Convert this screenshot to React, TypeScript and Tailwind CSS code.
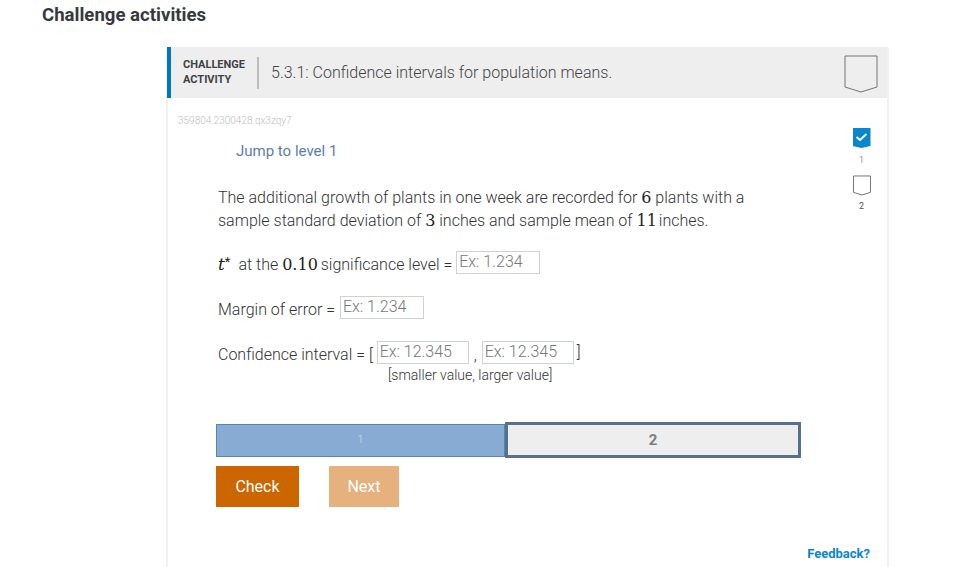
function Shield({ className }: { className: string }) {
  return (
    <svg className={className} viewBox="0 0 34 38" fill="none">
      <path d="M1 1H33V32L17 37L1 32Z" stroke="#757575" strokeWidth="1" vectorEffect="non-scaling-stroke" />
    </svg>
  );
}

function Field({ text, width }: { text: string; width: string }) {
  return (
    <span className={`inline-block h-[23px] border border-[#ccd3d6] pl-[2px] text-[16px] font-light leading-[20px] text-[#777] ${width}`}>
      {text}
    </span>
  );
}

function MathNum({ children }: { children: React.ReactNode }) {
  return <span className="font-['DejaVu_Serif',serif] text-[16px] leading-[16px] text-[#222]">{children}</span>;
}

export default function App() {
  return (
    <div className="h-[567px] w-[966px] overflow-hidden bg-white font-['Roboto',sans-serif] font-light text-[#333]">
      <h2 className="pl-[42px] pt-[4px] text-[18.6px] font-bold leading-[22px] text-[#36393d]">Challenge activities</h2>

      <div className="ml-[166px] mt-[21px] h-[530px] w-[723px] rounded-t-[2px] border-x-2 border-[#f1f1f1]">
        <div className="-ml-px flex h-[51px] items-center border-l-4 border-[#0077c5] bg-[#eeeeee]">
          <div className="-mt-[2px] w-[74px] pl-[12px] text-[11px] font-bold leading-[15px] text-[#3e4145]">
            CHALLENGE
            <br />
            ACTIVITY
          </div>
          <div className="ml-[12px] h-[32px] w-[2px] bg-[#bdbdbd]" />
          <div className="ml-[12px] text-[16px] text-[#444]">5.3.1: Confidence intervals for population means.</div>
          <Shield className="ml-auto mr-[9px] mt-[2px] h-[38px] w-[34px]" />
        </div>

        <div className="flex">
          <div className="w-[672px]">
            <div className="pl-[10px] pt-[17px] text-[10px] leading-[12px] text-[#bdbdbd]">359804.2300428.qx3zqy7</div>
            <div className="pl-[68px] pt-[15px] text-[15px] font-normal leading-[18px] text-[#5b7ea8]">Jump to level 1</div>

            <div className="pl-[50px]">
              <p className="mt-[26px] h-[46px] text-[16px] leading-[23px]">
                The additional growth of plants in one week are recorded for <MathNum>6</MathNum> plants with a
                <br />
                sample standard deviation of <MathNum>3</MathNum> inches and sample mean of <MathNum>11</MathNum>
                <span className="-ml-[2px]"> inches.</span>
              </p>

              <div className="mt-[18px] flex h-[24px] items-center text-[16px]">
                <div className="mt-[6px] flex items-center">
                  <span className="font-['DejaVu_Serif',serif] text-[17px] italic text-[#222]">t</span>
                  <span className="mb-[6px] text-[13px] font-normal text-[#222]">*</span>
                  <span className="ml-[8px]">at the&nbsp;</span>
                  <MathNum>0.10</MathNum>
                  <span className="-ml-[1px]">&nbsp;significance level =&nbsp;</span>
                </div>
                <Field text="Ex: 1.234" width="w-[84px]" />
              </div>

              <div className="mt-[21px] flex h-[24px] items-center text-[16px]">
                <span className="mr-[1px] mt-[6px]">Margin of error =&nbsp;</span>
                <Field text="Ex: 1.234" width="w-[84px]" />
              </div>

              <div className="mt-[21px] flex h-[24px] items-center text-[16px]">
                <span className="mt-[6px]">Confidence interval = [&nbsp;</span>
                <Field text="Ex: 12.345" width="w-[92px]" />
                <span className="mx-[5px] mt-[8px]">,</span>
                <Field text="Ex: 12.345" width="w-[92px]" />
                <span className="ml-[3px]">]</span>
              </div>
              <div className="pl-[170px] pt-[2px] text-[14px] leading-[18px] text-[#333]">[smaller value, larger value]</div>

              <div className="-ml-[2px] mt-[38px] flex h-[36px] w-[585px] items-center">
                <div className="flex h-[33px] w-[289px] items-center justify-center border border-[#5b84ac] bg-[#87abd2] text-[11px] text-[#d4dfec]">
                  1
                </div>
                <div className="flex h-[36px] w-[296px] items-center justify-center border-[3px] border-[#56708f] bg-[#eeeeee] text-[15px] font-bold text-[#7d7d7d]">
                  2
                </div>
              </div>

              <div className="-ml-[2px] mt-[8px] flex gap-[30px]">
                <div className="flex h-[41px] w-[83px] items-center justify-center bg-[#cc6600] pt-[1px] text-[16px] font-normal text-white">Check</div>
                <div className="flex h-[41px] w-[70px] items-center justify-center bg-[#e5b17d] pt-[1px] text-[16px] font-normal text-white">Next</div>
              </div>
            </div>
          </div>

          <div className="flex w-[43px] flex-col items-center pt-[30px] text-[9px] font-normal leading-[12px]">
            <div className="flex h-[20px] w-[18px] items-start justify-center bg-[#0a86d1] [clip-path:polygon(0_0,100%_0,100%_90%,50%_100%,0_90%)]">
              <svg className="mt-[4px] h-[10px] w-[13px]" viewBox="0 0 13 10" fill="none">
                <path d="M1.5 5L5 8L11.5 2" stroke="white" strokeWidth="2" />
              </svg>
            </div>
            <span className="mt-[6px] text-[#9a9a9a]">1</span>
            <Shield className="mt-[9px] h-[21px] w-[18px]" />
            <span className="mt-[4px] text-[#555]">2</span>
          </div>
        </div>

        <div className="mt-[39px] pr-[17px] text-right text-[13px] font-bold leading-[16px] text-[#0a86d1]">Feedback?</div>
      </div>
    </div>
  );
}
